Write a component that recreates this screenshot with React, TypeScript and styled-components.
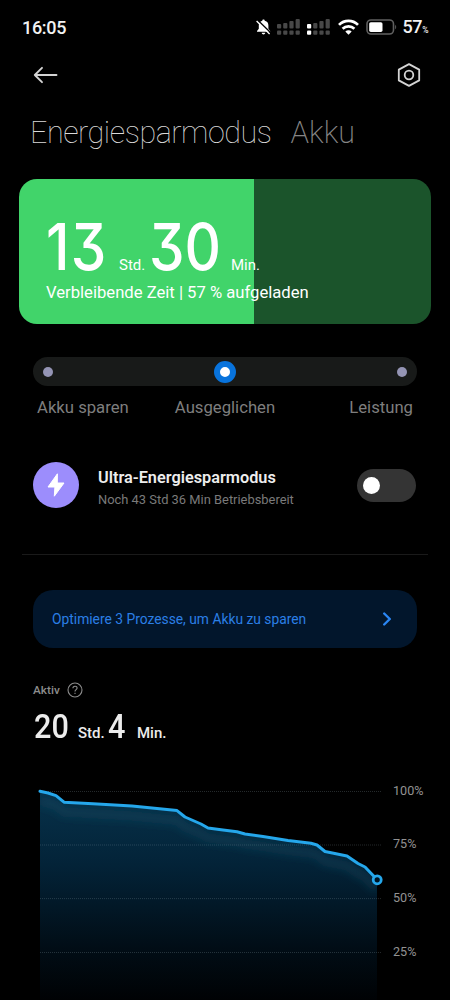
import React from "react";
import styled, { createGlobalStyle } from "styled-components";

const GlobalStyle = createGlobalStyle`
  html, body { margin: 0; background: #000; }
  body { font-family: Roboto, "Liberation Sans", sans-serif; color: #fff; }
  * { box-sizing: border-box; }
`;

const Screen = styled.main`
  width: 450px;
  height: 1000px;
  overflow: hidden;
  background: #000;
  display: flex;
  flex-direction: column;
`;

const StatusBar = styled.header`
  height: 54px;
  padding: 0 22px;
  display: flex;
  align-items: center;
  justify-content: space-between;
  flex-shrink: 0;
`;

const Clock = styled.time`
  font-size: 18px;
  font-weight: 500;
  line-height: 20px;
  padding-top: 2px;
  letter-spacing: -0.3px;
  color: #f2f2f2;
`;

const StatusIcons = styled.div`
  display: flex;
  align-items: center;
`;

const Percent = styled.span`
  font-size: 18px;
  font-weight: 500;
  line-height: 20px;
  letter-spacing: -0.4px;
  padding-top: 3px;
  margin-left: 5px;
  color: #f2f2f2;
  small { font-size: 8.5px; }
`;

const NavBar = styled.nav`
  height: 42px;
  padding: 0 29px 0 33px;
  display: flex;
  align-items: center;
  justify-content: space-between;
  flex-shrink: 0;
`;

const IconButton = styled.button`
  display: flex;
  padding: 0;
  border: 0;
  background: none;
`;

const Tabs = styled.div`
  display: flex;
  gap: 19px;
  padding: 19px 0 0 30px;
  height: 83px;
  flex-shrink: 0;
`;

const Tab = styled.span<{ $active?: boolean }>`
  font-size: 30.5px;
  line-height: 36px;
  font-weight: ${(p) => (p.$active ? 275 : 200)};
  letter-spacing: ${(p) => (p.$active ? -0.44 : 0)}px;
  color: ${(p) => (p.$active ? "#dadada" : "#858585")};
`;

const BatteryCard = styled.section`
  height: 145px;
  margin: 0 19px;
  padding: 33px 0 0 27px;
  border-radius: 18px;
  background: linear-gradient(to right, #41d46a 57%, #1b542b 57%);
  flex-shrink: 0;
`;

const TimeRow = styled.div`
  display: flex;
  align-items: baseline;
  height: 69px;
`;

const BigNumber = styled.span<{ $width: number; $spacing?: number }>`
  display: inline-block;
  width: ${(p) => p.$width}px;
  font-family: Inter, Roboto, sans-serif;
  font-size: 65px;
  line-height: 69px;
  font-weight: 550;
  font-feature-settings: "cv09";
  letter-spacing: ${(p) => p.$spacing ?? 0}px;
  white-space: nowrap;
  transform: scaleX(0.87);
  transform-origin: left;
`;

const BigUnit = styled.span<{ $width: number }>`
  width: ${(p) => p.$width}px;
  font-size: 15px;
  line-height: 18px;
`;

const Remaining = styled.div`
  font-size: 16.65px;
  line-height: 20px;
  margin-top: 2px;
`;

const Track = styled.div`
  height: 29px;
  margin: 33px 33px 0;
  padding: 0 10px;
  border-radius: 15px;
  background: #181a19;
  display: flex;
  align-items: center;
  justify-content: space-between;
  flex-shrink: 0;
`;

const Stop = styled.span<{ $selected?: boolean }>`
  width: ${(p) => (p.$selected ? 22 : 10)}px;
  height: ${(p) => (p.$selected ? 22 : 10)}px;
  border-radius: 50%;
  background: ${(p) => (p.$selected ? "#fff" : "#9494b4")};
  border: ${(p) => (p.$selected ? "6px solid #0873dc" : "0")};
`;

const StopLabels = styled.div`
  display: grid;
  grid-template-columns: 1fr auto 1fr;
  padding: 11px 37px 0;
  font-size: 16.7px;
  line-height: 21px;
  color: #7e7e7e;
  flex-shrink: 0;
  span:last-child { text-align: right; }
`;

const UltraRow = styled.section`
  height: 46px;
  margin: 44px 34px 0 33px;
  display: flex;
  align-items: center;
  flex-shrink: 0;
`;

const Badge = styled.span`
  width: 46px;
  height: 46px;
  border-radius: 50%;
  background: #9c8dfc;
  display: grid;
  place-items: center;
`;

const UltraText = styled.div`
  flex: 1;
  padding: 7px 0 0 19px;
`;

const UltraTitle = styled.div`
  font-size: 16.3px;
  line-height: 20px;
  font-weight: 600;
  color: #ededed;
`;

const UltraNote = styled.div`
  font-size: 12.9px;
  line-height: 18px;
  margin-top: 3px;
  color: #7a7a7a;
`;

const Toggle = styled.span`
  width: 59px;
  height: 33px;
  padding-left: 6px;
  border-radius: 17px;
  background: #343434;
  display: flex;
  align-items: center;
  &::before {
    content: "";
    width: 17px;
    height: 17px;
    border-radius: 50%;
    background: #fff;
  }
`;

const Divider = styled.hr`
  width: 406px;
  height: 1px;
  margin: 46px 22px 0;
  border: 0;
  background: #1a1a1a;
  flex-shrink: 0;
`;

const Banner = styled.section`
  height: 58px;
  margin: 35px 33px 0;
  padding: 0 25px 0 19px;
  border-radius: 20px;
  background: #02162c;
  color: #2b7fe6;
  font-size: 13.82px;
  display: flex;
  align-items: center;
  justify-content: space-between;
  flex-shrink: 0;
`;

const ActiveLabel = styled.div`
  display: flex;
  align-items: center;
  gap: 7px;
  height: 16px;
  margin: 34px 0 0 33px;
  font-size: 11.8px;
  font-weight: 500;
  color: #8c8c8c;
  flex-shrink: 0;
`;

const ActiveTime = styled.div`
  display: flex;
  align-items: baseline;
  height: 40px;
  margin: 8px 0 0 34px;
  color: #ececec;
  flex-shrink: 0;
`;

const ActiveNumber = styled.span<{ $width: number }>`
  width: ${(p) => p.$width}px;
  font-size: 34px;
  line-height: 40px;
  font-weight: 500;
  transform: scaleX(0.9);
  transform-origin: left;
`;

const ActiveUnit = styled.span<{ $width: number }>`
  width: ${(p) => p.$width}px;
  font-size: 15px;
  font-weight: 500;
`;

const ChartArea = styled.section`
  display: flex;
  height: 230px;
  margin-top: 24px;
  padding-left: 33px;
  flex-shrink: 0;
`;

const Axis = styled.div`
  display: flex;
  flex-direction: column;
  padding: 12.5px 0 0 10px;
  font-size: 12.6px;
  line-height: 16px;
  gap: 37.8px;
  color: #929292;
`;

function Signal({ lit }: { lit: boolean }) {
  return (
    <svg width="24" height="16" viewBox="0 0 24 16">
      {[0, 1, 2, 3].map((i) => {
        const color = lit && i === 0 ? "#fff" : "#484848";
        const top = [5, 4, 2, 0][i];
        return (
          <g key={i} fill={color}>
            <rect x={i * 6.2} y={top} width="4.2" height={9.6 - top} rx="1" />
            <rect x={i * 6.2} y="11.6" width="4.2" height="4.2" rx="1" />
          </g>
        );
      })}
    </svg>
  );
}

const CURVE =
  "M7 21.3 L15 23 L23 25.6 L31 32.2 L60 33.7 L99 36 L144 40.6 L152 47 L168 54 L175 58 L190 60 L204 61.8 L212 64 L230 66.5 L255 70.5 L278 73.3 L284 75 L292 81.5 L314 86 L325 93.5 L332 97 L344 109.5";

export default function App() {
  return (
    <Screen>
      <GlobalStyle />
      <StatusBar>
        <Clock>16:05</Clock>
        <StatusIcons>
          <svg width="15" height="16" viewBox="0 0 15 16" style={{ marginRight: 6 }}>
            <path d="M7.5 .6c.8 0 1.2.5 1.2 1.2C11.6 2.5 12.4 4.3 12.4 6.6v3.2l1.8 2.2v.7H1V12L2.8 9.8V6.6c0-2.3 1-4.1 3.5-4.8C6.3 1.1 6.7.6 7.5.6Z" fill="#fff" />
            <path d="M5.7 13.7h3.6c-.2 1.1-.9 1.7-1.8 1.7s-1.6-.6-1.8-1.7Z" fill="#fff" />
            <path d="M1.8 1.2 15 14.1" stroke="#000" strokeWidth="1.4" />
            <path d="M.6 2 13.6 15" stroke="#fff" strokeWidth="1.3" />
          </svg>
          <Signal lit={false} />
          <svg width="6" height="16" />
          <Signal lit />
          <svg width="21" height="16" viewBox="0 0 21 16" style={{ margin: "0 7px" }} fill="none" stroke="#fff" strokeWidth="2.7">
            <path d="M1 5.9c5.3-5.4 13.7-5.4 19 0" />
            <path d="M4.6 9.8c3.3-3.3 8.5-3.3 11.8 0" />
            <path d="M7.3 12.4c1.9-1.7 4.5-1.7 6.4 0L10.5 15.7Z" fill="#fff" stroke="none" />
          </svg>
          <svg width="31" height="16" viewBox="0 0 31 16">
            <rect x="1" y="1" width="26.5" height="14" rx="4" fill="none" stroke="#606060" strokeWidth="1.6" />
            <rect x="3.2" y="3.2" width="13.3" height="9.7" rx="1.6" fill="#fff" />
            <path d="M29.2 5.7c1.3.8 1.3 3.8 0 4.6Z" fill="#606060" />
          </svg>
          <Percent>57<small>%</small></Percent>
        </StatusIcons>
      </StatusBar>

      <NavBar>
        <IconButton aria-label="Zurück">
          <svg width="25" height="18" viewBox="0 0 25 18" fill="none" stroke="#d4d4d4" strokeWidth="1.9" strokeLinecap="round" strokeLinejoin="round">
            <path d="M23.5 9H1.8M9 1.8 1.8 9 9 16.2" />
          </svg>
        </IconButton>
        <IconButton aria-label="Einstellungen">
          <svg width="24" height="26" viewBox="0 0 24 26" fill="none" stroke="#d4d4d4" strokeWidth="1.8" strokeLinejoin="round">
            <path d="M12 2.1 22.2 7.6v10.8L12 23.9 1.8 18.4V7.6Z" />
            <circle cx="12" cy="13" r="4.3" />
          </svg>
        </IconButton>
      </NavBar>

      <Tabs>
        <Tab $active>Energiesparmodus</Tab>
        <Tab>Akku</Tab>
      </Tabs>

      <BatteryCard>
        <TimeRow>
          <BigNumber $width={73} $spacing={1.5}>13</BigNumber>
          <BigUnit $width={30}>Std.</BigUnit>
          <BigNumber $width={82}>30</BigNumber>
          <BigUnit $width={31}>Min.</BigUnit>
        </TimeRow>
        <Remaining>Verbleibende Zeit | 57 % aufgeladen</Remaining>
      </BatteryCard>

      <Track>
        <Stop />
        <Stop $selected />
        <Stop />
      </Track>
      <StopLabels>
        <span>Akku sparen</span>
        <span>Ausgeglichen</span>
        <span>Leistung</span>
      </StopLabels>

      <UltraRow>
        <Badge>
          <svg width="18" height="24" viewBox="0 0 18 24" fill="#fff" stroke="#fff" strokeLinejoin="round">
            <path d="M10.4.8 1 14h6.9l-.6 9.2L17 10h-6.7Z" />
          </svg>
        </Badge>
        <UltraText>
          <UltraTitle>Ultra-Energiesparmodus</UltraTitle>
          <UltraNote>Noch 43 Std 36 Min Betriebsbereit</UltraNote>
        </UltraText>
        <Toggle />
      </UltraRow>

      <Divider />

      <Banner>
        <span>Optimiere 3 Prozesse, um Akku zu sparen</span>
        <svg width="10" height="14" viewBox="0 0 10 14" fill="none" stroke="#2b86f3" strokeWidth="2.4" strokeLinecap="round" strokeLinejoin="round">
          <path d="M2.2 1.5 7.8 7 2.2 12.5" />
        </svg>
      </Banner>

      <ActiveLabel>
        Aktiv
        <svg width="16" height="16" viewBox="0 0 16 16" fill="none" stroke="#8c8c8c" strokeWidth="1.1">
          <circle cx="8" cy="8" r="7" />
          <path d="M5.9 6.3c0-1.3.9-2.1 2.1-2.1s2.1.8 2.1 1.9C10.1 7.5 8 7.7 8 9.4M8 10.7v1.3" />
        </svg>
      </ActiveLabel>
      <ActiveTime>
        <ActiveNumber $width={44}>20</ActiveNumber>
        <ActiveUnit $width={30}>Std.</ActiveUnit>
        <ActiveNumber $width={29}>4</ActiveNumber>
        <ActiveUnit $width={32}>Min.</ActiveUnit>
      </ActiveTime>

      <ChartArea>
        <svg width="350" height="230" viewBox="0 0 350 230" fill="none">
          <defs>
            <linearGradient id="fill" x1="0" y1="21" x2="0" y2="230" gradientUnits="userSpaceOnUse">
              <stop offset="0" stopColor="#07324b" />
              <stop offset="0.35" stopColor="#032338" />
              <stop offset="0.75" stopColor="#010d16" />
              <stop offset="1" stopColor="#000204" />
            </linearGradient>
            <clipPath id="area">
              <path d={`${CURVE} V230 H7 Z`} />
            </clipPath>
            <filter id="soft" x="-10%" y="-30%" width="120%" height="160%">
              <feGaussianBlur stdDeviation="4" />
            </filter>
          </defs>
          <path d={`${CURVE} V230 H7 Z`} fill="url(#fill)" />
          <g clipPath="url(#area)">
            <path d={CURVE} transform="translate(0 10)" stroke="#1d5a72" strokeOpacity="0.3" strokeWidth="9" filter="url(#soft)" />
          </g>
          {[21.5, 75, 128.6, 182.5].map((y) => (
            <path key={y} d={`M7 ${y}H349`} stroke="#9ab0b8" strokeOpacity="0.23" strokeDasharray="1 1" />
          ))}
          <path d={CURVE} stroke="#25a7eb" strokeWidth="3" strokeLinejoin="round" strokeLinecap="round" />
          <circle cx="344.2" cy="109.8" r="4" fill="#001321" stroke="#25a7eb" strokeWidth="2.8" />
        </svg>
        <Axis>
          <span>100%</span>
          <span>75%</span>
          <span>50%</span>
          <span>25%</span>
        </Axis>
      </ChartArea>
    </Screen>
  );
}
